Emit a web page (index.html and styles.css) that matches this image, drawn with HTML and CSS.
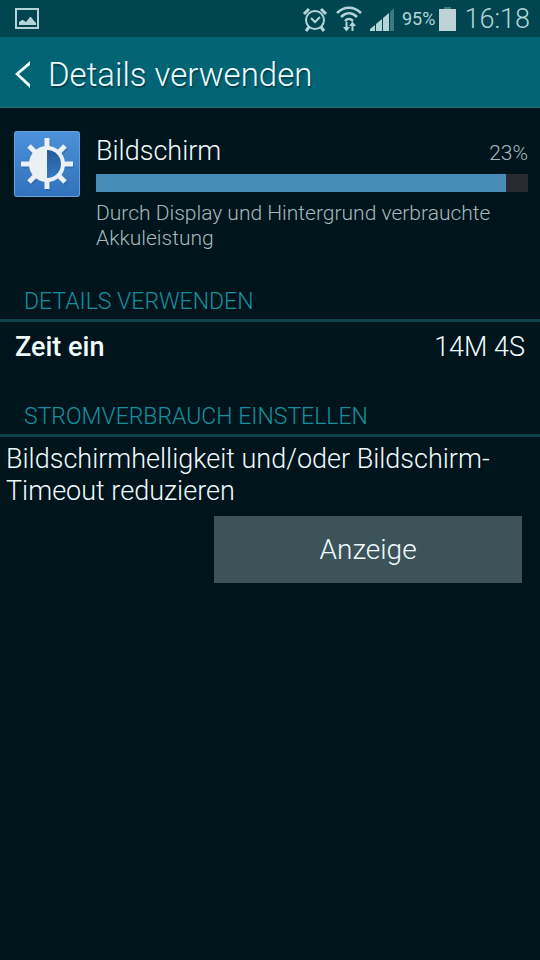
FILE: index.html
```html
<!DOCTYPE html>
<html lang="de">
<head>
<meta charset="utf-8">
<meta name="viewport" content="width=device-width, initial-scale=1">
<title>Details verwenden</title>
<link rel="stylesheet" href="styles.css">
</head>
<body>
<div class="status-bar">
  <svg class="picture-icon" width="24" height="21" viewBox="0 0 24 21" aria-hidden="true">
    <path d="M1 1h22v19H1z" fill="none" stroke="#b4d5d8" stroke-width="2"/>
    <path d="M4 17v-3l3-2 1 0 3 2 4-5 1 0 3 4 2 2v2z" fill="#b4d5d8"/>
  </svg>
  <div class="status-icons">
    <svg width="26" height="26" viewBox="0 0 26 26" fill="none" stroke="#b4d5d8" stroke-width="2" aria-hidden="true">
      <circle cx="13" cy="14" r="9"/>
      <path d="M9 12l4 4 5-5"/>
      <path d="M2 8l5-5M24 8l-5-5" stroke-width="3"/>
      <path d="M7 21l-3 4M19 21l3 4" stroke-width="3"/>
    </svg>
    <svg width="26" height="26" viewBox="0 0 26 26" fill="none" stroke="#b4d5d8" stroke-width="2.500" aria-hidden="true">
      <path d="M1 7C8 0 18 0 25 7M5 11c5-5 11-5 16 0M9 15c3-3 5-3 8 0"/>
      <path d="M10.500 16v6M16.500 18v7" stroke-width="2"/>
      <path d="M7 21h7l-3.500 4.500zM13 20h7l-3.500-4.500z" fill="#b4d5d8" stroke="none"/>
    </svg>
    <svg width="24" height="24" viewBox="0 0 24 24" fill="#b4d5d8" aria-hidden="true">
      <path d="M0 24v-2l5-4v6zM6 24v-7l6-5v12zM13 24V11l6-5v18z"/>
      <path d="M20 24V5l4-4v23z" fill="#3d7981"/>
    </svg>
    <span class="battery-level">95%</span>
    <svg width="17" height="24" viewBox="0 0 17 24" aria-hidden="true">
      <path d="M5 0h7v2H5z" fill="#477b80"/>
      <path d="M0 2h17v22H0z" fill="#bed3d6"/>
    </svg>
    <time class="clock">16:18</time>
  </div>
</div>
<header class="title-bar">
  <button class="back" type="button" aria-label="Zurück">
    <svg width="16" height="28" viewBox="0 0 16 28" aria-hidden="true">
      <path d="M15 0v4L4 13l11 10v4L0 13z" fill="#f1fcff"/>
    </svg>
  </button>
  <h1>Details verwenden</h1>
</header>
<main>
  <section class="summary">
    <svg class="app-icon" width="66" height="66" viewBox="0 0 66 66" aria-hidden="true">
      <defs>
        <linearGradient id="tile" x2="0" y2="1">
          <stop offset="0" stop-color="#4c91db"/>
          <stop offset="1" stop-color="#3072bb"/>
        </linearGradient>
        <linearGradient id="half" x2="0" y2="1">
          <stop offset="0" stop-color="#235b96"/>
          <stop offset="1" stop-color="#3678c2"/>
        </linearGradient>
      </defs>
      <rect width="66" height="66" rx="3" fill="#65a0dc"/>
      <rect x="1" y="1" width="64" height="64" rx="2" fill="url(#tile)"/>
      <path d="M34 9v10M34 50v10M8 35h10M50 35h10M16 17l8 8M44 45l8 8M16 53l8-8M44 25l8-8" stroke="#235f9e" stroke-opacity=".5" stroke-width="5"/>
      <path d="M33 7v10M33 48v10M7 33h10M49 33h10M15 15l8 8M43 43l8 8M15 51l8-8M43 23l8-8" stroke="#edf0f2" stroke-width="5"/>
      <circle cx="33" cy="33" r="18" fill="#edf0f2"/>
      <path d="M33 19a14 14 0 0 1 0 28z" fill="url(#half)"/>
    </svg>
    <div class="usage">
      <div class="usage-head">
        <h2 id="usage-name">Bildschirm</h2>
        <span class="percent">23%</span>
      </div>
      <progress value="95" max="100" aria-labelledby="usage-name"></progress>
      <p>Durch Display und Hintergrund verbrauchte Akkuleistung</p>
    </div>
  </section>
  <section>
    <h3>DETAILS VERWENDEN</h3>
    <dl class="detail">
      <dt>Zeit ein</dt>
      <dd>14M 4S</dd>
    </dl>
  </section>
  <section>
    <h3>STROMVERBRAUCH EINSTELLEN</h3>
    <p class="advice">Bildschirmhelligkeit und/oder Bildschirm-Timeout reduzieren</p>
    <button class="action" type="button">Anzeige</button>
  </section>
</main>
</body>
</html>
```
FILE: styles.css
```css
* {
  box-sizing: border-box;
  margin: 0;
  padding: 0;
}

body {
  min-height: 100vh;
  background: #00141b;
  color: #f1fcff;
  font-family: Roboto, "Liberation Sans", sans-serif;
  font-size: 27px;
  font-weight: 300;
  line-height: 32px;
}

h1, h2, h3 {
  font-weight: 300;
}

svg {
  display: block;
  flex: none;
}

button {
  border: 0;
  color: inherit;
  font: inherit;
}

.status-bar {
  display: flex;
  justify-content: space-between;
  align-items: center;
  height: 37px;
  padding: 0 10px 0 15px;
  background: #004550;
  color: #b4d5d8;
}

.status-icons {
  display: flex;
  align-items: center;
  gap: 8px;
}

.battery-level {
  margin-right: -4px;
  font-size: 18px;
  font-weight: 400;
}

.clock {
  font-size: 27px;
}

.title-bar {
  display: flex;
  align-items: center;
  gap: 17px;
  height: 71px;
  padding: 5px 15px 0;
  background: #006475;
  border-bottom: 1px solid #2c6d76;
}

.back {
  background: none;
}

h1 {
  font-size: 33px;
  line-height: 41px;
  text-shadow: 1px 2px 1px #00414c;
}

.summary {
  display: flex;
  gap: 16px;
  padding: 23px 12px 0 14px;
}

.usage {
  flex: 1;
}

.usage-head {
  display: flex;
  justify-content: space-between;
  align-items: baseline;
  padding-top: 4px;
}

h2 {
  font-size: 27px;
}

.percent,
.usage p {
  color: #a4b8bd;
  font-size: 21px;
}

progress {
  display: block;
  width: 100%;
  height: 18px;
  margin: 5px 0 9px;
  appearance: none;
  border: 0;
  background: #292930;
}

progress::-webkit-progress-bar {
  background: #292930;
}

progress::-webkit-progress-value {
  background: #468db7;
}

.usage p {
  line-height: 25px;
}

h3 {
  margin-top: 35px;
  padding: 0 24px 1px;
  border-bottom: 3px solid #094249;
  color: #1590a0;
  font-size: 23px;
}

.detail {
  display: flex;
  justify-content: space-between;
  padding: 9px 15px 3px;
}

dt {
  font-weight: 500;
}

.advice {
  padding: 6px;
}

.action {
  display: block;
  width: 57%;
  height: 67px;
  margin: 3px 18px 0 auto;
  background: #3c535a;
  font-size: 28px;
}
```
